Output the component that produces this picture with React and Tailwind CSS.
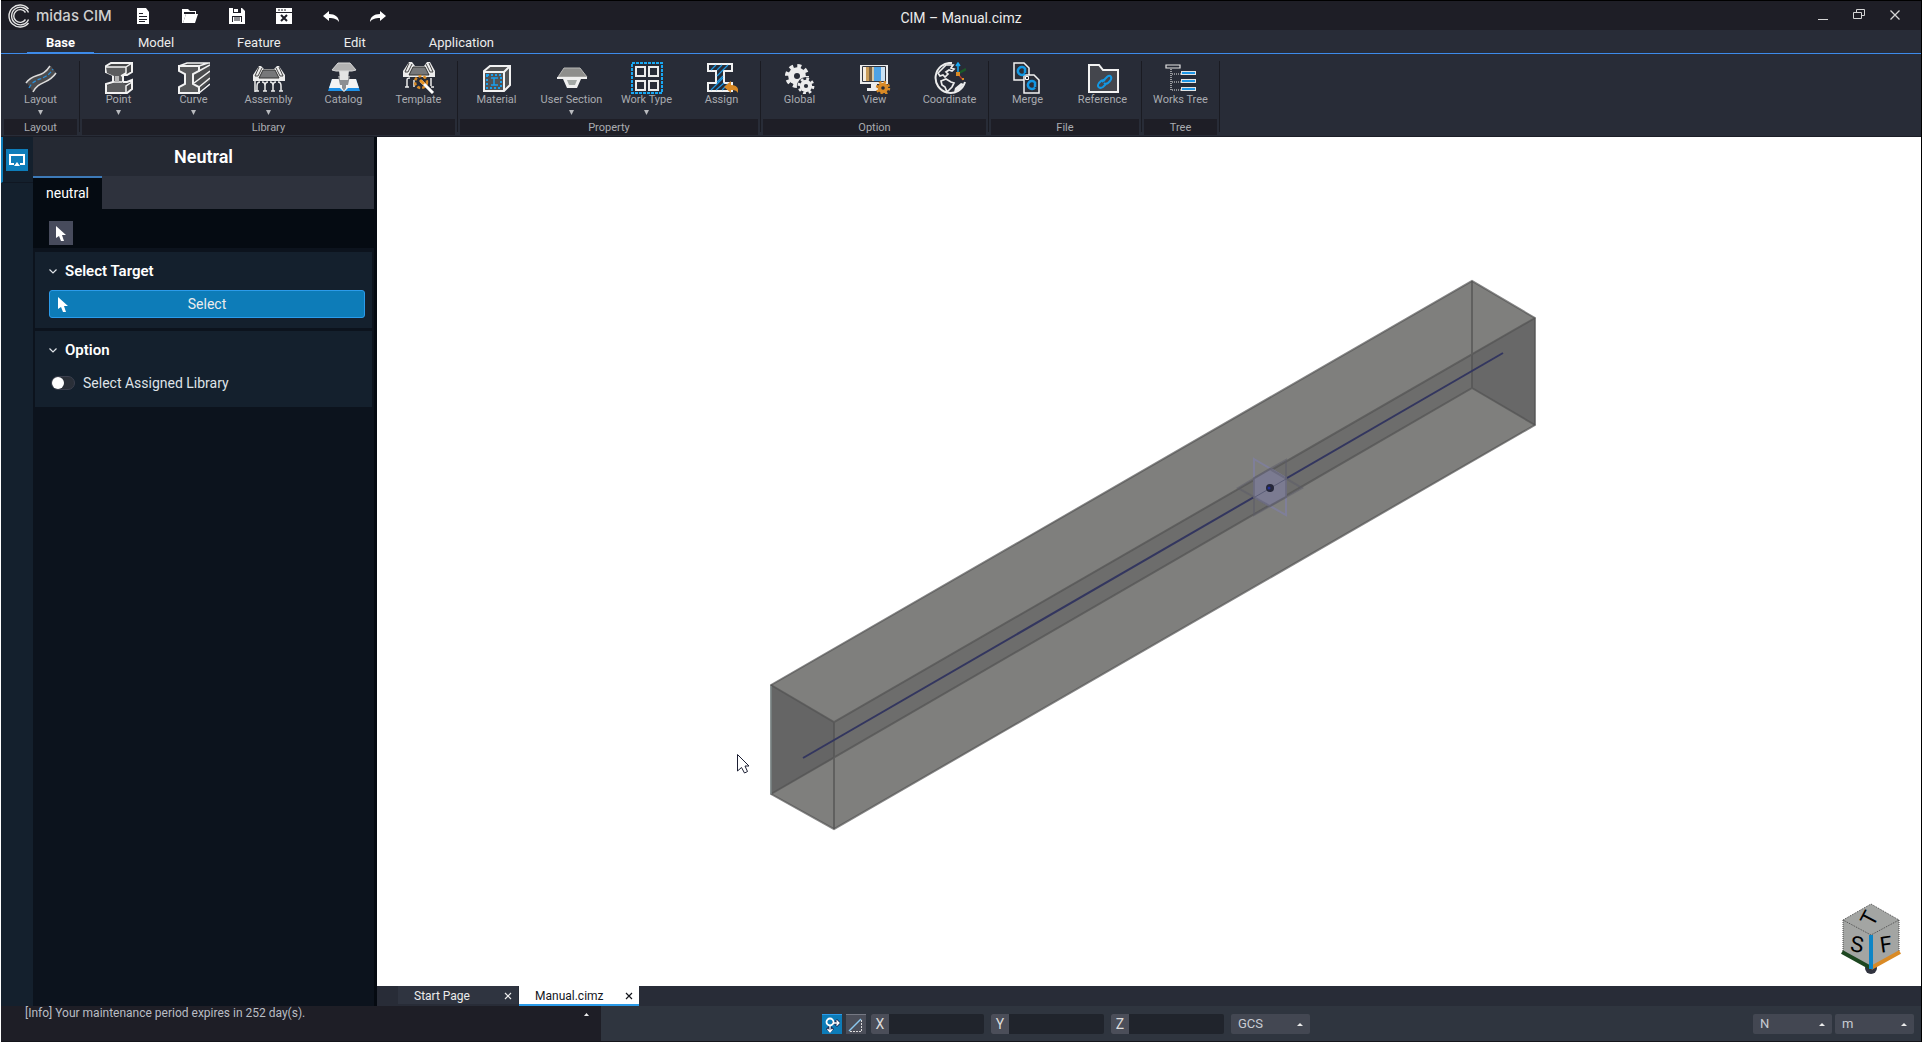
import { useState } from 'react';
import clsx from 'clsx';

const MENUS = ['Base', 'Model', 'Feature', 'Edit', 'Application'];

const Svg = ({ children, size = 32, className = '' }) => (
  <svg width={size} height={size} viewBox={`0 0 ${size} ${size}`} fill="none" className={clsx('block shrink-0', className)} aria-hidden="true">
    {children}
  </svg>
);

const LayoutIcon = () => (
  <Svg>
    <path d="M2 21C9 10 18 17 26 4l5 7C23 23 15 18 8 30z" fill="#4b4b4d" />
    <path d="M1 21C8 10 17 17 25 4M8 30C14 18 23 23 31 11" stroke="#dcdcdc" strokeWidth="1.5" />
    <path d="M4 26C10 14 20 20 28 7" stroke="#2b8fd8" strokeWidth="1.3" strokeDasharray="4 2" />
  </Svg>
);

const PointIcon = () => (
  <Svg>
    <path d="M3 4l5-3h21v9l-5 3h-4v7h4l5-2v9l-5 4H3v-9l7-2v-7l-7-3z" fill="#454648" stroke="#f2f2f2" strokeWidth="2" />
    <path d="M3 5h20v6l-4 3v6l4 3v7H4v-6l7-3v-7l-7-3z" fill="#5b5c5e" />
    <path d="M3 5h20v6l-5 3M23 5l6-4M29 20l-6 4v6M11 20h8" stroke="#f2f2f2" strokeWidth="1.5" />
    <path d="M14 14v6" stroke="#b4b4b4" strokeWidth="4" />
  </Svg>
);

const CurveIcon = () => (
  <Svg>
    <path d="M1 5l8-4h23v18L20 31H1v-6l7-3V12L1 9z" fill="#4b4c4e" />
    <path d="M1 4h20v5l-6 3v10l6 3v6H1v-6l6-3V12L1 9z" fill="#58595b" stroke="#f2f2f2" strokeWidth="2" />
    <path d="M1 4l8-3h23M21 4l9-3M21 9l11-6M16 21l16-12M21 25l11-9M21 31l11-9" stroke="#f2f2f2" strokeWidth="1.5" />
  </Svg>
);

const AssemblyIcon = () => (
  <Svg>
    <path d="M6 4h2l3 3h10l3-3h2l6 9v6H0v-6z" fill="#ececec" />
    <path d="M10 8h12l4 8H6z" fill="#77787a" stroke="#333" strokeWidth="1" />
    <path d="M6 5L2 14h3l4-8M26 5l4 9h-3l-4-8" stroke="#444" strokeWidth="1" />
    <path d="M2 19v11M4 29v-5c0-2 1-4 3-4M12 29v-5c0-2-1-4-3-4M12 24c0-2 1-4 3-4M20 29v-5c0-2-1-4-3-4M20 24c0-2 1-4 3-4M28 29v-5c0-2-1-4-3-4M2 29h4M10 29h4M18 29h4M26 29h4" stroke="#ececec" strokeWidth="1.5" />
  </Svg>
);

const CatalogIcon = () => (
  <Svg>
    <path d="M4 17h24l4 12H0z" fill="#1e90e6" />
    <path d="M4 17h24l3 9H20l-4 4-4-4H1z" fill="#f4f4f4" />
    <path d="M10 14h12l-2 9h-2v3l-2 3-2-3v-3h-2z" fill="#8d8f92" />
    <path d="M11 8h10l-1 10h-8z" fill="#e4e4e4" />
    <path d="M10 1h12l6 7-4 1H8L4 8z" fill="#b2b2b2" stroke="#d9d9d9" strokeWidth="1" />
  </Svg>
);

const TemplateIcon = () => (
  <Svg>
    <path d="M6 0h3l3 4h9l3-4h3l5 9v6H0V9z" fill="#ececec" />
    <path d="M10 5h12l4 8H6z" fill="#77787a" stroke="#333" strokeWidth="1" />
    <path d="M6 1L2 10h3l4-8M26 1l4 9h-3l-4-8" stroke="#444" strokeWidth="1" />
    <path d="M4 25v-7c0-2 1-2 3-2M11 25v-7M2 25h4M28 24v-8M28 25h3" stroke="#ececec" strokeWidth="1.5" />
    <circle cx="18" cy="20" r="6" stroke="#d98a25" strokeWidth="2.5" strokeDasharray="3 2" />
    <path d="M18 19l12 12" stroke="#fff" strokeWidth="3" />
    <path d="M17 18l4 4" stroke="#e89424" strokeWidth="3" />
  </Svg>
);

const MaterialIcon = () => (
  <Svg>
    <path d="M3 9l6-5h20v19l-6 6H3z" fill="#515254" stroke="#f2f2f2" strokeWidth="2" />
    <path d="M3 10h20v19M23 10l6-6" stroke="#f2f2f2" strokeWidth="2" />
    <path d="M6 13h14v13H6z" stroke="#18a0ee" strokeWidth="2" strokeDasharray="2 2" />
    <path d="M10 16h7M10 23h7M13 16v7" stroke="#18a0ee" strokeWidth="1.5" />
  </Svg>
);

const UserSectionIcon = () => (
  <Svg>
    <path d="M8 6h16l7 9H2z" fill="#8e8e8c" stroke="#b7b7b5" strokeWidth="1" />
    <path d="M1 15h30v2h-6l-4 9H11l-4-9H1z" fill="#efefef" />
    <path d="M11 18h10l-2 5h-6z" fill="#a4a9a6" />
  </Svg>
);

const WorkTypeIcon = () => (
  <Svg>
    <path d="M1 1h30v30H1z" stroke="#18a8f4" strokeWidth="2" strokeDasharray="3 1" />
    <path d="M5 5h9v9H5zM18 5h9v9h-9zM5 19h9v9H5zM18 19h9v9h-9z" stroke="#ececec" strokeWidth="2" />
  </Svg>
);

const AssignIcon = () => (
  <Svg>
    <path d="M2 2h24v7h-8v12h8v8H2v-8h8V9H2z" fill="#272c37" stroke="#f2f2f2" strokeWidth="2" />
    <path d="M5 8l5-5M11 8l5-5M17 8l5-5M11 14l6-6M11 20l6-6M5 28l12-12M10 28l8-7M16 28l6-6" stroke="#209ae4" strokeWidth="1.2" />
    <path d="M18 25l7-6v4c5 0 8 2 7 8-2-3-4-3-7-3v3z" fill="#d98a25" />
  </Svg>
);

// Toothed wheel: a dashed ring for the teeth around a filled disc
const Gear = ({ cx, cy, r, color, hole = '#282c37' }) => (
  <g>
    <circle cx={cx} cy={cy} r={r} stroke={color} strokeWidth={r * 0.4} strokeDasharray={`${(r * Math.PI) / 8} ${(r * Math.PI) / 8}`} />
    <circle cx={cx} cy={cy} r={r * 0.88} fill={color} />
    <circle cx={cx} cy={cy} r={r * 0.3} fill={hole} />
  </g>
);

const GlobalIcon = () => (
  <Svg>
    <Gear cx={13} cy={14} r={10} color="#ececec" />
    <circle cx="22" cy="24" r="9" fill="#282c37" />
    <Gear cx={22} cy={24} r={7} color="#ececec" />
  </Svg>
);

const ViewIcon = () => (
  <Svg>
    <path d="M1 3h28v19H1z" fill="#ececec" />
    <path d="M4 5h3v14H4z" fill="#f6ede0" />
    <path d="M7 5h3v14H7z" fill="#c99c5a" />
    <path d="M10 5h3v14h-3z" fill="#7b6140" />
    <path d="M13 5h2v14h-2z" fill="#d6c8a8" />
    <path d="M15 5h7v14h-7z" fill="#4ea2e4" />
    <path d="M22 5h4v14h-4z" fill="#cbe2f4" />
    <path d="M3.500 4.500h23v15h-23z" stroke="#33363f" />
    <path d="M12 22h6v4h3v3H8v-3h4z" fill="#ececec" />
    <Gear cx={24} cy={26} r={6} color="#d98a25" />
  </Svg>
);

const CoordinateIcon = () => (
  <Svg>
    <path d="M18 1A15 15 0 1 0 31 20" stroke="#ececec" strokeWidth="2" />
    <path d="M12 3L4 11l2 3 3-1 2 2 3-3-2-2 3-2 3 1 2-2-3-1 2-3zM7 19l5-2 5 3 3 1-2 4-3 3-2 2-2-5-3-2z" stroke="#ececec" strokeWidth="1.7" />
    <path d="M21 26l6-5 3 1-5 6-5 2z" fill="#ececec" />
    <path d="M24 12V1M22 4l2-3 2 3" stroke="#18a8f4" strokeWidth="1.5" />
    <path d="M25 11l7-4" stroke="#1c5a28" strokeWidth="2.5" />
    <path d="M24 12l5 6" stroke="#b33a2e" strokeWidth="1.2" />
    <path d="M22 10h4v4h-4zM28 16h2v2h-2z" fill="#d98a25" />
  </Svg>
);

const MergeIcon = () => (
  <Svg>
    <path d="M2 1h10l5 5v12H2z" fill="#2c2f38" stroke="#f2f2f2" strokeWidth="1.5" />
    <path d="M12 13h10l5 5v13H12z" fill="#2c2f38" stroke="#f2f2f2" strokeWidth="1.5" />
    <path d="M13 6.500A4 4 0 1 0 13 11.500M23 20.500A4 4 0 1 0 23 25.500M13 6v5M23 20v5" stroke="#1298e4" strokeWidth="2.500" />
    <path d="M13.500 14.500h3v3h-3z" fill="#2c2f38" stroke="#fff" />
  </Svg>
);

const ReferenceIcon = () => (
  <Svg>
    <path d="M2 3h10l4 5h15v22H2z" fill="#44464d" stroke="#f2f2f2" strokeWidth="2" />
    <path d="M15 20l5-5c3-3 6 0 3 4l-2 2c-1 1-3 1-4 0M18 19c-1-1-3-1-4 0l-2 2c-3 4 1 6 4 4l4-4" stroke="#1298e4" strokeWidth="2" />
  </Svg>
);

const TreeIcon = () => (
  <Svg>
    <path d="M1 3h14v3H1z" fill="#282c37" stroke="#e4e4e4" strokeWidth="1.2" />
    <path d="M6 7v21M7 12h9M7 20h9M7 28h9" stroke="#e4e4e4" strokeWidth="1.2" strokeDasharray="1 1" />
    <path d="M16 9h15v4H16zM16 17h15v4H16zM16 25h15v4H16z" fill="#e4e4e4" />
    <path d="M17 10h13v2H17zM17 18h13v2H17zM17 26h13v2H17z" fill="#1e96e6" />
  </Svg>
);

const RIBBON = [
  { name: 'Layout', items: [{ label: 'Layout', icon: LayoutIcon, menu: true }] },
  {
    name: 'Library',
    items: [
      { label: 'Point', icon: PointIcon, menu: true },
      { label: 'Curve', icon: CurveIcon, menu: true },
      { label: 'Assembly', icon: AssemblyIcon, menu: true },
      { label: 'Catalog', icon: CatalogIcon },
      { label: 'Template', icon: TemplateIcon },
    ],
  },
  {
    name: 'Property',
    items: [
      { label: 'Material', icon: MaterialIcon },
      { label: 'User Section', icon: UserSectionIcon, menu: true },
      { label: 'Work Type', icon: WorkTypeIcon, menu: true },
      { label: 'Assign', icon: AssignIcon },
    ],
  },
  {
    name: 'Option',
    items: [
      { label: 'Global', icon: GlobalIcon },
      { label: 'View', icon: ViewIcon },
      { label: 'Coordinate', icon: CoordinateIcon },
    ],
  },
  {
    name: 'File',
    items: [
      { label: 'Merge', icon: MergeIcon },
      { label: 'Reference', icon: ReferenceIcon },
    ],
  },
  { name: 'Tree', items: [{ label: 'Works Tree', icon: TreeIcon }] },
];

const QUICK = [
  {
    label: 'New',
    art: (
      <>
        <path d="M2 0h9l3 4v12H2z" fill="#fff" />
        <path d="M4 5.500h4M4 8.500h8M4 11.500h8M4 13.500h6" stroke="#1e1e26" strokeWidth="1" />
      </>
    ),
  },
  {
    label: 'Open',
    art: (
      <>
        <path d="M0 1h6l2 2h6v3H4L1 15H0z" fill="#fff" />
        <path d="M2 5h11" stroke="#1e1e26" strokeWidth="2" />
        <path d="M4 6h12l-3 9H1z" fill="#fff" />
      </>
    ),
  },
  {
    label: 'Save',
    art: (
      <>
        <path d="M0 0h13l3 3v13H0z" fill="#fff" />
        <path d="M4 0h8v5H4zM3 8h10v6H3z" fill="#1e1e26" />
        <path d="M5 1h4v3H5zM4 9h8v5H4z" fill="#fff" />
        <path d="M5 10h6M5 12h6" stroke="#1e1e26" />
      </>
    ),
  },
  {
    label: 'Close project',
    art: (
      <>
        <path d="M0 0h16v16H0z" fill="#fff" />
        <path d="M0 4.500h16" stroke="#1e1e26" />
        <path d="M2 2h2M5 2h2M8 2h2" stroke="#1e1e26" strokeWidth="1" />
        <path d="M5 7l6 6M11 7l-6 6" stroke="#1e1e26" strokeWidth="2" />
      </>
    ),
  },
  { label: 'Undo', art: <path d="M0 8l6-5v3c6 0 10 3 10 8-2-3-5-4-10-4v3z" fill="#fff" /> },
  { label: 'Redo', art: <path d="M16 8l-6-5v3C4 6 0 9 0 14c2-3 5-4 10-4v3z" fill="#fff" /> },
];

const Pointer = ({ className = '' }) => (
  <svg width="10" height="15" viewBox="0 0 10 15" className={className} aria-hidden="true">
    <path d="M0 0v12l3-2 2 5h3L6 9h4z" fill="#fff" />
  </svg>
);

const Chevron = () => (
  <svg width="8" height="5" viewBox="0 0 8 5" fill="none" aria-hidden="true">
    <path d="M0.500 0.500L4 4l3.500-3.500" stroke="#dfe3e8" strokeWidth="1.200" />
  </svg>
);

function TitleBar() {
  return (
    <header className="grid h-[30px] grid-cols-[1fr_auto_1fr] items-center border-t border-black bg-[#1e1e26]">
      <div className="flex items-center">
        <div className="ml-[7px] flex w-[118px] items-center gap-1">
          <Svg size={24}>
            <path d="M20.500 5A11 11 0 1 0 20.500 19" stroke="#e4e4e4" strokeWidth="1.400" />
            <path d="M20.500 8.500A8.800 8.800 0 1 0 20.500 15.500" stroke="#e4e4e4" strokeWidth="1.400" />
            <path d="M17.500 8.500A6.400 6.400 0 1 0 17.500 15.500" stroke="#e4e4e4" strokeWidth="1.400" />
          </Svg>
          <span className="font-[Inter] text-[15px] leading-4 font-medium whitespace-nowrap text-[#cfcfcf]">midas CIM</span>
        </div>
        <div className="ml-[9px] flex gap-[31px]">
          {QUICK.map((q) => (
            <button key={q.label} aria-label={q.label}>
              <Svg size={16}>{q.art}</Svg>
            </button>
          ))}
        </div>
      </div>
      <h1 className="pt-1 text-[14px] leading-5 text-[#ececec]">CIM – Manual.cimz</h1>
      <div className="flex justify-end gap-6 pr-5 pb-0.5">
        <button aria-label="Minimize">
          <Svg size={12}><path d="M1 10h10v1H1z" fill="#d5d5d5" /></Svg>
        </button>
        <button aria-label="Restore">
          <Svg size={12}><path d="M3.500 3.500v-3h8v6h-3M0.500 3.500h8v6h-8z" stroke="#d5d5d5" /></Svg>
        </button>
        <button aria-label="Close">
          <Svg size={12}><path d="M1.500 1.500l9 9M10.500 1.500l-9 9" stroke="#d5d5d5" strokeWidth="1.300" /></Svg>
        </button>
      </div>
    </header>
  );
}

function MenuBar({ active, onSelect }) {
  return (
    <nav className="flex h-6 items-stretch border-b border-[#3d8bea] bg-[#282c37] pl-[26px]">
      {MENUS.map((m) => (
        <button
          key={m}
          onClick={() => onSelect(m)}
          className={clsx(
            'mr-[25px] border-b px-[19px] pt-1 text-[13px] leading-4',
            active === m ? 'border-[#3d8bea] font-bold text-white' : 'border-transparent text-[#ececec]'
          )}
        >
          {m}
        </button>
      ))}
    </nav>
  );
}

function Ribbon() {
  return (
    <section className="flex h-[83px] gap-[2px] border-b border-[#1b1d26] bg-[#282c37] pl-[3px]">
      {RIBBON.map((group) => (
        <div key={group.name} className="flex gap-[2px]">
          <div className="flex flex-col">
            <div className="flex h-[65px] gap-[2px] pt-2">
              {group.items.map(({ label, icon: Icon, menu }) => (
                <button key={label} className="flex w-[73px] flex-col items-center">
                  <Icon />
                  <span className="text-[11px] leading-3 whitespace-nowrap text-[#a9abb0]">{label}</span>
                  {menu && (
                    <svg width="5" height="5" viewBox="0 0 5 5" className="mt-1" aria-hidden="true">
                      <path d="M0 0h5L2.500 5z" fill="#b9bbbf" />
                    </svg>
                  )}
                </button>
              ))}
            </div>
            <div className="h-4 bg-[#1e1e26] text-center text-[11px] leading-[17px] text-[#a9abb0]">{group.name}</div>
          </div>
          <div className="mt-[7px] h-[71px] w-px bg-[#1a1b22]" />
        </div>
      ))}
    </section>
  );
}

function Section({ title, children }) {
  return (
    <section className="mx-[2px] mb-[3px] h-[76px] bg-[#14202d] pt-[9px] pr-[7px] pl-[14px]">
      <button className="flex h-5 items-center gap-2 text-[15px] font-semibold text-white">
        <Chevron />
        {title}
      </button>
      {children}
    </section>
  );
}

function SidePanel() {
  const [assigned, setAssigned] = useState(false);
  return (
    <aside className="flex w-[376px] shrink-0 border-r-[3px] border-[#050a11] bg-[#0c131d]">
      <div className="w-8 shrink-0 bg-[#14202d]">
        <div className="h-[46px] border-b border-l-2 border-b-[#101722] border-l-[#0d7dba] pt-3 pl-[3px]">
          <button aria-label="Neutral panel" className="flex size-[22px] items-center justify-center bg-[#0d7dba]">
            <Svg size={16}>
              <path d="M5 12H1V3h14v9h-4" stroke="#fff" strokeWidth="2" />
              <path d="M8 10l3 4H5z" fill="#fff" />
            </Svg>
          </button>
        </div>
      </div>
      <div className="min-w-0 flex-1">
        <h2 className="h-[39px] bg-[#252933] text-center text-lg leading-[40px] font-semibold text-white">Neutral</h2>
        <div className="flex h-[33px] bg-[#2e323d]">
          <button className="border-t-2 border-[#3d7ab8] bg-[#050b12] px-[13px] pb-0.5 text-[14px] leading-5 text-white">neutral</button>
        </div>
        <div className="mb-[4px] h-[39px] bg-[#050b12] pt-3 pl-4">
          <button aria-label="Pick" className="flex size-6 items-center justify-center bg-[#474b5c]">
            <Pointer />
          </button>
        </div>
        <Section title="Select Target">
          <button className="relative mt-[9px] h-7 w-full rounded-[3px] border border-[#2b9bea] bg-[#0d7cb8] text-[14px] text-[#ececec]">
            <Pointer className="absolute top-1.5 left-2" />
            Select
          </button>
        </Section>
        <Section title="Option">
          <label className="mt-[13px] flex h-5 items-center gap-2 text-[14px] text-[#dfe3e8]">
            <input
              type="checkbox"
              checked={assigned}
              onChange={(e) => setAssigned(e.target.checked)}
              className="ml-0.5 h-3.5 w-6 appearance-none rounded-full border border-[#3b3f4d] bg-[#2a2f38] before:block before:size-3 before:rounded-full before:bg-white checked:bg-[#0d7cb8] checked:before:ml-2.5"
            />
            Select Assigned Library
          </label>
        </Section>
      </div>
    </aside>
  );
}

function Model() {
  return (
    <svg viewBox="377 137 1544 849" className="block h-full w-full" role="img" aria-label="Beam model">
      <path d="M771 685L1472 281L1535 318V425L834 829L771 794z" fill="#7f7f7d" />
      <path d="M771 685L834 722L1535 318V425L1472 388L771 794z" fill="#6d6d6c" />
      <path d="M771 685L834 722V758L771 794z" fill="#656565" />
      <path d="M1535 318V425L1472 388V354z" fill="#686868" />
      <g fill="none" stroke="#535353" strokeWidth="2" strokeOpacity="0.7">
        <path d="M771 685L1472 281L1535 318V425L834 829L771 794z" />
        <path d="M771 685L834 722L1535 318M834 722V829M1472 281V388L771 794M1472 388L1535 425" />
      </g>
      <path d="M771 686V794" stroke="#8fa0a0" strokeWidth="1" />
      <path d="M803 758L1503 353" stroke="#33365f" strokeWidth="2" />
      <path d="M1254 478L1270 469L1286 478V497L1270 506L1254 497z" fill="#7b7b91" />
      <g fill="none" stroke="#8080a0" strokeWidth="2">
        <path d="M1254 459L1286 478V515L1254 497z" strokeOpacity="0.8" />
        <path d="M1286 460V497L1254 515V478z" stroke="#5c5c68" strokeOpacity="0.5" />
        <path d="M1238 488L1270 469L1302 488L1270 506z" stroke="#5c5c68" strokeOpacity="0.5" />
      </g>
      <path d="M1255 497L1286 479" stroke="#5c5e78" strokeWidth="1" />
      <circle cx="1270" cy="488" r="4" fill="#26283a" />
      <circle cx="1269" cy="488" r="1.500" fill="#23309a" />
      {/* mouse pointer */}
      <path d="M737.500 754.500v16.500l4-3.500 3 5.500 3-1.500-2.500-5.500h4z" fill="#fff" stroke="#1c1f33" />
    </svg>
  );
}

function ViewCube() {
  return (
    <svg width="60" height="72" viewBox="1841 902 60 72" className="absolute right-5 bottom-3" role="img" aria-label="View cube">
      <circle cx="1871" cy="968" r="6" fill="#30333f" />
      <path d="M1871 904L1899 920V952L1871 968L1843 952V920z" fill="#a3a5a3" />
      <path d="M1871 904L1899 920L1871 935L1843 920zM1843 920V952M1899 920V952" fill="none" stroke="#4c4c4c" strokeDasharray="1 1" />
      <path d="M1842 952L1871 968" stroke="#1d4620" strokeWidth="4" />
      <path d="M1871 968L1900 952" stroke="#d98a25" strokeWidth="4" />
      <path d="M1871 935V969" stroke="#0d85c6" strokeWidth="4" />
      <g fill="#000" className="font-[Roboto] text-[22px]" textAnchor="middle">
        <text transform="translate(1856 952) rotate(8)">S</text>
        <text transform="translate(1887 952) rotate(-8)">F</text>
        <text transform="translate(1876 922) rotate(-62)">T</text>
      </g>
    </svg>
  );
}

function DocTab({ label, active }) {
  return (
    <div
      className={clsx(
        'flex w-[120px] items-center justify-between border-b-2 pt-0.5 pr-1.5 pl-4 text-[12px] leading-4',
        active ? 'border-[#2b9be8] bg-white text-[#14161c]' : 'border-[#282c37] bg-[#2f3440] text-[#ececec]'
      )}
    >
      <button>{label}</button>
      <button aria-label={`Close ${label}`}>
        <svg width="8" height="8" viewBox="0 0 8 8" fill="none" aria-hidden="true">
          <path d="M1 1l6 6M7 1L1 7" stroke="currentColor" strokeWidth="1.200" />
        </svg>
      </button>
    </div>
  );
}

const CoordField = ({ axis }) => (
  <label className="mr-[7px] flex h-5 overflow-hidden rounded-[2px] bg-[#20242c]">
    <span className="w-[18px] bg-[#4b4e59] text-center text-[14px] leading-[21px] text-[#dcdcdc]">{axis}</span>
    <input className="w-[95px] bg-transparent px-1 text-[13px] text-white outline-none" />
  </label>
);

const Picker = ({ label, options }) => (
  <div className="relative h-5 w-[79px]">
    <select aria-label={label} className="block h-5 w-full appearance-none rounded-[2px] bg-[#434752] pl-[7px] text-[13px] leading-5 text-[#c9ccd2] outline-none">
      {options.map((o) => <option key={o}>{o}</option>)}
    </select>
    <svg width="6" height="3" viewBox="0 0 6 3" className="pointer-events-none absolute top-[9px] right-[7px]" aria-hidden="true">
      <path d="M0 3h6L3 0z" fill="#ececec" />
    </svg>
  </div>
);

function StatusBar() {
  return (
    <footer className="flex h-9 shrink-0 border-b border-[#14151b] bg-[#2f353f]">
      <div className="flex w-[600px] shrink-0 justify-between bg-[#1e1e26] pr-3 pl-6">
        <p className="text-[12px] leading-[15px] text-[#b9bdc4]">[Info] Your maintenance period expires in 252 day(s).</p>
        <button aria-label="Show messages" className="h-4">
          <svg width="5" height="3" viewBox="0 0 5 3" aria-hidden="true">
            <path d="M0 3h5L2.500 0z" fill="#ececec" />
          </svg>
        </button>
      </div>
      <div className="flex flex-1 items-start pt-2 pr-[7px] pl-[221px]">
        <button aria-label="Point snap" className="mr-1 flex size-5 items-center justify-center border-t border-[#2b9bea] bg-[#0d7cb8]">
          <Svg size={16}>
            <path d="M6 8v6M3 11l3 3 3-3M8 6h6M12 3l3 3-3 3" stroke="#1b2750" strokeWidth="3" />
            <circle cx="6" cy="5" r="3.500" stroke="#fff" strokeWidth="1.800" />
            <path d="M6 9v6M3.500 12l2.500 3 2.500-3M9 6h6M12.500 3.500l2.500 2.500-2.500 2.500" stroke="#fff" strokeWidth="1.300" />
          </Svg>
        </button>
        <button aria-label="Relative coordinates" className="mr-[5px] flex size-5 items-center justify-center border-t border-[#757883] bg-[#4b4e59]">
          <Svg size={16}>
            <path d="M1 14L13 2" stroke="#8cc8f0" strokeWidth="1.500" />
            <path d="M13.500 3v12M2 14.500h12" stroke="#dcdcdc" strokeDasharray="2 1" />
          </Svg>
        </button>
        <CoordField axis="X" />
        <CoordField axis="Y" />
        <CoordField axis="Z" />
        <Picker label="Coordinate system" options={['GCS', 'UCS']} />
        <div className="ml-auto flex gap-[3px]">
          <Picker label="Force unit" options={['N', 'kN']} />
          <Picker label="Length unit" options={['m', 'mm']} />
        </div>
      </div>
    </footer>
  );
}

export default function App() {
  const [menu, setMenu] = useState('Base');
  return (
    <div className="flex h-screen flex-col overflow-hidden border-r border-l border-r-black border-l-white bg-[#282c37] font-[Roboto,sans-serif]">
      <TitleBar />
      <MenuBar active={menu} onSelect={setMenu} />
      <Ribbon />
      <main className="flex min-h-0 flex-1">
        <SidePanel />
        <div className="flex min-w-0 flex-1 flex-col">
          <div className="relative min-h-0 flex-1 bg-white">
            <Model />
            <ViewCube />
          </div>
          <div className="flex h-5 gap-px bg-[#282c37] pl-[21px]">
            <DocTab label="Start Page" />
            <DocTab label="Manual.cimz" active />
          </div>
        </div>
      </main>
      <StatusBar />
    </div>
  );
}
